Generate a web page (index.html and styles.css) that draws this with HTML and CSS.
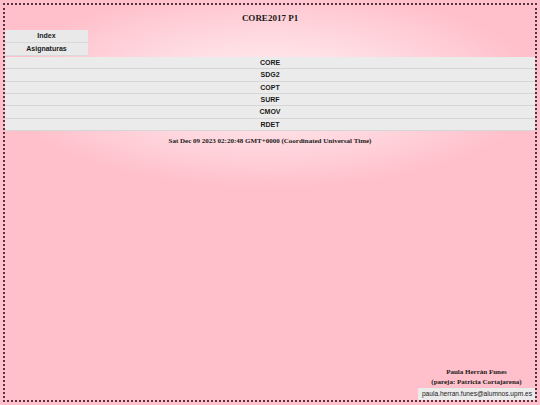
FILE: index.html
```html
<!DOCTYPE html>
<html>
<head>
<meta charset="utf-8">
<link rel="stylesheet" href="styles.css">
</head>
<body>
<div class="frame">
  <h1 class="title">CORE2017 P1</h1>
  <nav class="menu">
    <div class="menu-item">Index</div>
    <div class="menu-item">Asignaturas</div>
  </nav>
  <ul class="subjects">
    <li>CORE</li>
    <li>SDG2</li>
    <li>COPT</li>
    <li>SURF</li>
    <li>CMOV</li>
    <li>RDET</li>
  </ul>
  <p class="date">Sat Dec 09 2023 02:20:48 GMT+0000 (Coordinated Universal Time)</p>
  <footer class="footer">
    <div class="author">Paula Herrán Funes</div>
    <div class="author">(pareja: Patricia Cortajarena)</div>
    <div class="email">paula.herran.funes@alumnos.upm.es</div>
  </footer>
</div>
</body>
</html>
```

FILE: styles.css
```css
html, body {
  margin: 0;
  padding: 0;
  height: 100%;
}
body {
  background-color: #ffc0cb;
  background-image: radial-gradient(ellipse 270px 100px at 50% 88px, #fff0f2 0%, #ffdde3 45%, #ffc0cb 100%);
  background-repeat: no-repeat;
  font-family: "Liberation Sans", Arial, sans-serif;
  color: #1a1a1a;
}
.frame {
  box-sizing: border-box;
  margin: 3px;
  height: calc(100% - 6px);
  border: 2px dotted #553440;
  display: flex;
  flex-direction: column;
}
.title {
  margin: 0;
  padding-top: 8px;
  height: 17px;
  font-family: "Liberation Serif", "Times New Roman", serif;
  font-size: 9px;
  font-weight: bold;
  text-align: center;
  line-height: 11px;
}
.menu {
  width: 83px;
  display: flex;
  flex-direction: column;
}
.menu-item {
  background: #e9e9e9;
  height: 12px;
  line-height: 12px;
  border-bottom: 1px solid #d9d9d9;
  font-size: 7px;
  font-weight: bold;
  text-align: center;
}
.subjects {
  list-style: none;
  margin: 1px 0 0 0;
  padding: 0;
}
.subjects li {
  background: #ebebeb;
  height: 11.33px;
  line-height: 11.33px;
  border-bottom: 1px solid #d6d6d6;
  font-size: 7px;
  font-weight: bold;
  text-align: center;
}
.date {
  margin: 5px 0 0 0;
  font-family: "Liberation Serif", "Times New Roman", serif;
  font-size: 7px;
  font-weight: bold;
  text-align: center;
  line-height: 10px;
}
.footer {
  margin-top: auto;
  margin-bottom: 0;
  align-self: flex-end;
  display: flex;
  flex-direction: column;
  align-items: center;
}
.author {
  font-family: "Liberation Serif", "Times New Roman", serif;
  font-size: 7px;
  font-weight: bold;
  line-height: 10px;
}
.email {
  background: #ebebeb;
  font-size: 6.6px;
  line-height: 12px;
  padding: 0 3px 0 4px;
  margin-top: 1px;
}
```
